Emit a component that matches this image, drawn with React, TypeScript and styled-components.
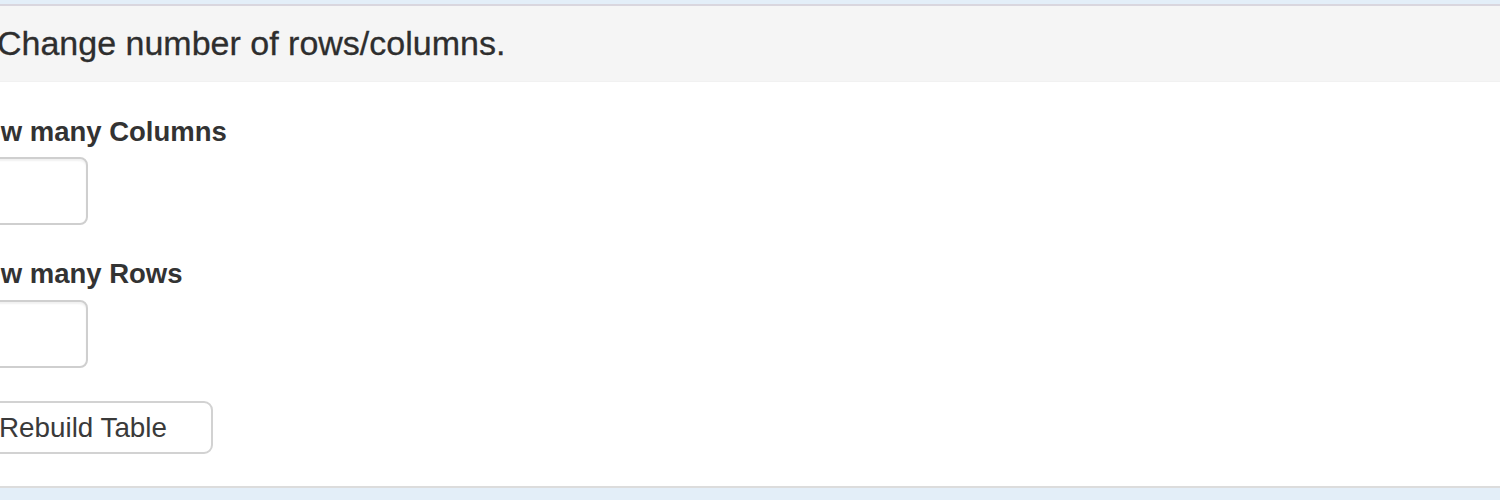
import React from "react";
import styled, { createGlobalStyle } from "styled-components";

const Global = createGlobalStyle`
  html, body { margin: 0; padding: 0; overflow: hidden; }
  body { font-family: "Liberation Sans", Arial, Helvetica, sans-serif; color: #333; }
`;

const Page = styled.div`
  background: #e3eef8;
  height: 500px;
  padding-top: 4px;
  box-sizing: border-box;
  overflow: hidden;
`;

const Panel = styled.section`
  margin-left: -40px;
  width: calc(100% + 80px);
  background: #fff;
  border-top: 2px solid #d9d6de;
  border-bottom: 2px solid #dcdcdc;
`;

const Heading = styled.header`
  height: 75px;
  display: flex;
  align-items: center;
  padding-left: 37px;
  background: #f5f5f5;
  border-bottom: 1px solid #f1f1f1;
  font-size: 34px;
  color: #2e2e2e;
  -webkit-text-stroke: 0.3px #2e2e2e;
`;

const Body = styled.form`
  padding: 31px 0 32px 4px;
  display: flex;
  flex-direction: column;
  align-items: flex-start;
`;

const Group = styled.div<{ $gap: number }>`
  display: flex;
  flex-direction: column;
  align-items: flex-start;
  margin-bottom: ${(p) => p.$gap}px;
`;

const Label = styled.label<{ $space: number }>`
  display: block;
  font-weight: bold;
  font-size: 27.5px;
  line-height: 38px;
  margin-bottom: ${(p) => p.$space}px;
  color: #333;
`;

const Input = styled.input`
  box-sizing: border-box;
  width: 124px;
  height: 68px;
  border: 2px solid #cfcfcf;
  border-radius: 8px;
  box-shadow: inset 0 2px 2px rgba(0, 0, 0, 0.06);
  background: #fff;
  outline: none;
`;

const Button = styled.button`
  box-sizing: border-box;
  height: 53px;
  margin-left: -11px;
  padding: 0 44px;
  border: 2px solid #d2d2d2;
  border-radius: 9px;
  background: #fff;
  font-family: "Liberation Sans", Arial, Helvetica, sans-serif;
  font-size: 27.8px;
  color: #3a3a3a;
  cursor: pointer;
`;

export default function App() {
  return (
    <Page>
      <Global />
      <Panel>
        <Heading>Change number of rows/columns.</Heading>
        <Body onSubmit={(e) => e.preventDefault()}>
          <Group $gap={30}>
            <Label $space={6}>How many Columns</Label>
            <Input type="text" />
          </Group>
          <Group $gap={33}>
            <Label $space={7}>How many Rows</Label>
            <Input type="text" />
          </Group>
          <Button type="button">Rebuild Table</Button>
        </Body>
      </Panel>
    </Page>
  );
}
